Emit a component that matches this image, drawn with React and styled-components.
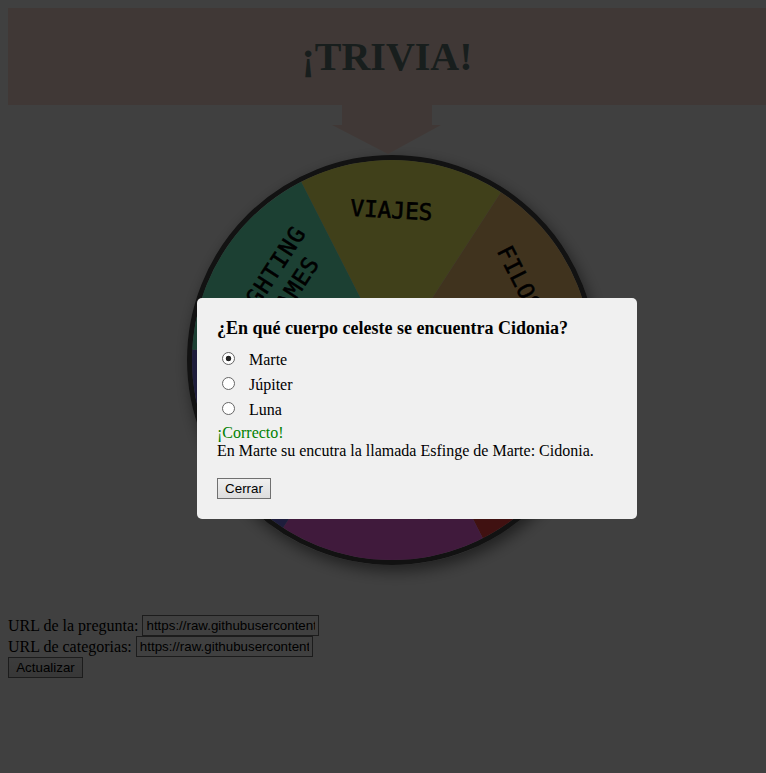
import React from "react";
import styled, { createGlobalStyle } from "styled-components";

const GlobalStyle = createGlobalStyle`
  html, body { margin: 0; height: 100%; overflow: hidden; background: #fff; }
  body { padding: 8px; box-sizing: border-box; color: #000; font: 16px/18px "Liberation Serif", "Times New Roman", serif; }
`;

const Header = styled.header`
  height: 97px;
  width: 766px;
  display: flex;
  justify-content: center;
  background: #ffe0d6;
`;

const Title = styled.h1`
  margin: 0;
  padding: 25px 8px 0 0;
  font-size: 40px;
  line-height: 48px;
  color: #607874;
`;

const Arrow = styled.svg`
  display: block;
  margin-left: 324px;
  width: 110px;
  height: 50px;
  fill: #ffe0d6;
`;

const Wheel = styled.div`
  box-sizing: border-box;
  width: 410px;
  height: 410px;
  margin-left: 179px;
  border: 5px solid #484848;
  border-radius: 50%;
  box-shadow: 3px 6px 15px rgba(0, 0, 0, 0.5);

  svg { display: block; width: 400px; height: 400px; border-radius: 50%; }
`;

const Label = styled.text`
  font: 22.7px "Comic Sans MS", "DejaVu Sans Mono", monospace;
  stroke: #000;
  stroke-width: 0.6px;
  text-anchor: middle;
`;

const Form = styled.form`
  margin-top: 50px;
  display: flex;
  flex-direction: column;
  align-items: flex-start;
`;

const Field = styled.label`
  display: flex;
  align-items: center;
  gap: 4px;
  height: 21px;
  line-height: 17px;
  white-space: nowrap;
`;

const TextInput = styled.input`
  box-sizing: border-box;
  width: 177px;
  height: 21px;
  margin: 0;
  padding: 1px 3px;
  border: 1px solid #707070;
  border-radius: 0;
  background: #fff;
  color: #000;
  font: 13.33px "Liberation Sans", Arial, sans-serif;
`;

const Button = styled.button`
  display: block;
  box-sizing: border-box;
  width: ${(p) => p.$width}px;
  height: 21px;
  margin: 0;
  padding: 0;
  border: 1px solid #707070;
  border-radius: 0;
  background: linear-gradient(#f0f0f0, #dddddd);
  color: #000;
  font: 13.33px/18px "Liberation Sans", Arial, sans-serif;
`;

const Overlay = styled.div`
  position: fixed;
  inset: 0;
  background: rgba(0, 0, 0, 0.75);
`;

const Dialog = styled.section`
  position: absolute;
  left: 197px;
  top: 298px;
  box-sizing: border-box;
  width: 440px;
  height: 221px;
  padding: 20px;
  border-radius: 5px;
  background: #f0f0f0;
`;

const Question = styled.h3`
  margin: 0 0 9px;
  font-size: 18px;
  line-height: 20px;
  white-space: nowrap;
`;

const Option = styled.label`
  display: flex;
  align-items: center;
  height: 25px;
  line-height: 25px;
`;

const Radio = styled.input`
  appearance: none;
  box-sizing: border-box;
  width: 13px;
  height: 13px;
  margin: 0 14px 2px 5px;
  border: 1px solid #666;
  border-radius: 50%;
  background: #fff;

  &:checked { background: radial-gradient(circle, #222 2.5px, #fff 3.1px); }
`;

const Verdict = styled.div`
  margin-top: 2px;
  color: #008000;
`;

const Explanation = styled.p`
  margin: 0 0 18px;
  white-space: nowrap;
`;

const sectors = [
  { start: -27, color: "#ffff68" },
  { start: 33, color: "#ffcc78" },
  { start: 93, color: "#ff4444" },
  { start: 153, color: "#ff68f0" },
  { start: 213, color: "#7874f0" },
  { start: 273, color: "#70ffcc" },
];

const point = (deg) => {
  const a = (deg * Math.PI) / 180;
  return `${200 + 202 * Math.sin(a)} ${200 - 202 * Math.cos(a)}`;
};

const answers = ["Marte", "Júpiter", "Luna"];
const source = "https://raw.githubusercontent.com/";

export default function App() {
  return (
    <>
      <GlobalStyle />
      <Header><Title>¡TRIVIA!</Title></Header>
      <Arrow viewBox="0 0 110 50"><path d="M10 0H100V20H109L56 49L0 20H10Z" /></Arrow>
      <Wheel>
        <svg viewBox="0 0 400 400">
          {sectors.map(({ start, color }) => (
            <path key={start} fill={color} d={`M200 200L${point(start)}A202 202 0 0 1 ${point(start + 60)}Z`} />
          ))}
          <Label transform="translate(199 58) rotate(3)" textLength="82">VIAJES</Label>
          <Label transform="translate(333 147) rotate(63)" textLength="126">FILOSOFÍA</Label>
          <Label transform="translate(82 123) rotate(-57)" textLength="118">FIGHTING</Label>
          <Label transform="translate(108 134) rotate(-57)" textLength="72">GAMES</Label>
          <Label transform="translate(218 341) rotate(183)" textLength="55">CINE</Label>
        </svg>
      </Wheel>
      <Form>
        <Field>URL de la pregunta:<TextInput defaultValue={source} /></Field>
        <Field>URL de categorias:<TextInput defaultValue={source} /></Field>
        <Button type="button" $width={75}>Actualizar</Button>
      </Form>
      <Overlay>
        <Dialog role="dialog">
          <Question>¿En qué cuerpo celeste se encuentra Cidonia?</Question>
          {answers.map((answer, i) => (
            <Option key={answer}>
              <Radio type="radio" name="answer" defaultChecked={i === 0} />
              {answer}
            </Option>
          ))}
          <Verdict>¡Correcto!</Verdict>
          <Explanation>En Marte su encutra la llamada Esfinge de Marte: Cidonia.</Explanation>
          <Button type="button" $width={54}>Cerrar</Button>
        </Dialog>
      </Overlay>
    </>
  );
}
